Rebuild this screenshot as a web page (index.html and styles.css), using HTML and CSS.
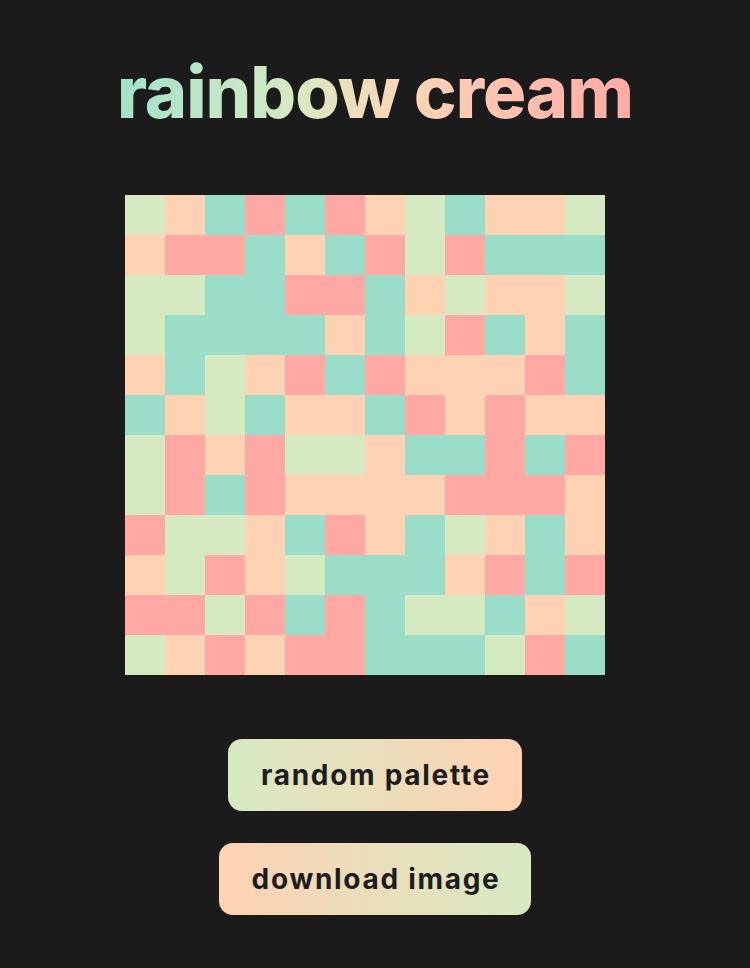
FILE: index.html
```html
<!DOCTYPE html>
<html lang="en">
<head>
<meta charset="utf-8">
<title>rainbow cream</title>
<link rel="stylesheet" href="styles.css">
</head>
<body>
<main class="app">
  <h1 class="title">rainbow cream</h1>
  <div class="board">
    <span class="g"></span><span class="p"></span><span class="m"></span><span class="r"></span><span class="m"></span><span class="r"></span><span class="p"></span><span class="g"></span><span class="m"></span><span class="p"></span><span class="p"></span><span class="g"></span>
    <span class="p"></span><span class="r"></span><span class="r"></span><span class="m"></span><span class="p"></span><span class="m"></span><span class="r"></span><span class="g"></span><span class="r"></span><span class="m"></span><span class="m"></span><span class="m"></span>
    <span class="g"></span><span class="g"></span><span class="m"></span><span class="m"></span><span class="r"></span><span class="r"></span><span class="m"></span><span class="p"></span><span class="g"></span><span class="p"></span><span class="p"></span><span class="g"></span>
    <span class="g"></span><span class="m"></span><span class="m"></span><span class="m"></span><span class="m"></span><span class="p"></span><span class="m"></span><span class="g"></span><span class="r"></span><span class="m"></span><span class="p"></span><span class="m"></span>
    <span class="p"></span><span class="m"></span><span class="g"></span><span class="p"></span><span class="r"></span><span class="m"></span><span class="r"></span><span class="p"></span><span class="p"></span><span class="p"></span><span class="r"></span><span class="m"></span>
    <span class="m"></span><span class="p"></span><span class="g"></span><span class="m"></span><span class="p"></span><span class="p"></span><span class="m"></span><span class="r"></span><span class="p"></span><span class="r"></span><span class="p"></span><span class="p"></span>
    <span class="g"></span><span class="r"></span><span class="p"></span><span class="r"></span><span class="g"></span><span class="g"></span><span class="p"></span><span class="m"></span><span class="m"></span><span class="r"></span><span class="m"></span><span class="r"></span>
    <span class="g"></span><span class="r"></span><span class="m"></span><span class="r"></span><span class="p"></span><span class="p"></span><span class="p"></span><span class="p"></span><span class="r"></span><span class="r"></span><span class="r"></span><span class="p"></span>
    <span class="r"></span><span class="g"></span><span class="g"></span><span class="p"></span><span class="m"></span><span class="r"></span><span class="p"></span><span class="m"></span><span class="g"></span><span class="p"></span><span class="m"></span><span class="p"></span>
    <span class="p"></span><span class="g"></span><span class="r"></span><span class="p"></span><span class="g"></span><span class="m"></span><span class="m"></span><span class="m"></span><span class="p"></span><span class="r"></span><span class="m"></span><span class="r"></span>
    <span class="r"></span><span class="r"></span><span class="g"></span><span class="r"></span><span class="m"></span><span class="r"></span><span class="m"></span><span class="g"></span><span class="g"></span><span class="m"></span><span class="p"></span><span class="g"></span>
    <span class="g"></span><span class="p"></span><span class="r"></span><span class="p"></span><span class="r"></span><span class="r"></span><span class="m"></span><span class="m"></span><span class="m"></span><span class="g"></span><span class="r"></span><span class="m"></span>
  </div>
  <div class="actions">
    <button class="btn btn-random" type="button">random palette</button>
    <button class="btn btn-download" type="button">download image</button>
  </div>
</main>
</body>
</html>
```
FILE: styles.css
```css
html, body {
  margin: 0;
  padding: 0;
  background: #1b1b1b;
}

body {
  font-family: "Inter", "Liberation Sans", sans-serif;
  min-height: 968px;
}

.app {
  display: flex;
  flex-direction: column;
  align-items: center;
  padding-top: 56px;
}

.title {
  margin: 0;
  font-size: 72px;
  line-height: 72px;
  font-weight: 800;
  letter-spacing: -1px;
  background: linear-gradient(90deg, #a2e2cb 0%, #d8e9c3 35%, #ffd4b6 57%, #ffaaa5 100%);
  -webkit-background-clip: text;
  background-clip: text;
  color: transparent;
}

.board {
  margin-top: 67px;
  margin-right: 20px;
  display: grid;
  grid-template-columns: repeat(12, 40px);
  grid-auto-rows: 40px;
}

.board span { display: block; }
.board .m { background: #9addc8; }
.board .g { background: #d6eac2; }
.board .p { background: #ffd2b3; }
.board .r { background: #ffa8a4; }

.actions {
  margin-top: 64px;
  display: flex;
  flex-direction: column;
  align-items: center;
  gap: 32px;
}

.btn {
  border: none;
  height: 72px;
  padding: 0 31px 0 33px;
  border-radius: 14px;
  font-family: "Inter", "Liberation Sans", sans-serif;
  font-size: 28px;
  font-weight: 700;
  letter-spacing: 1.7px;
  color: #1d1d1d;
  cursor: pointer;
}

.btn-random {
  background: linear-gradient(90deg, #d6eac2, #ffd2b3);
}

.btn-download {
  background: linear-gradient(90deg, #ffd2b3, #d6eac2);
}
```
